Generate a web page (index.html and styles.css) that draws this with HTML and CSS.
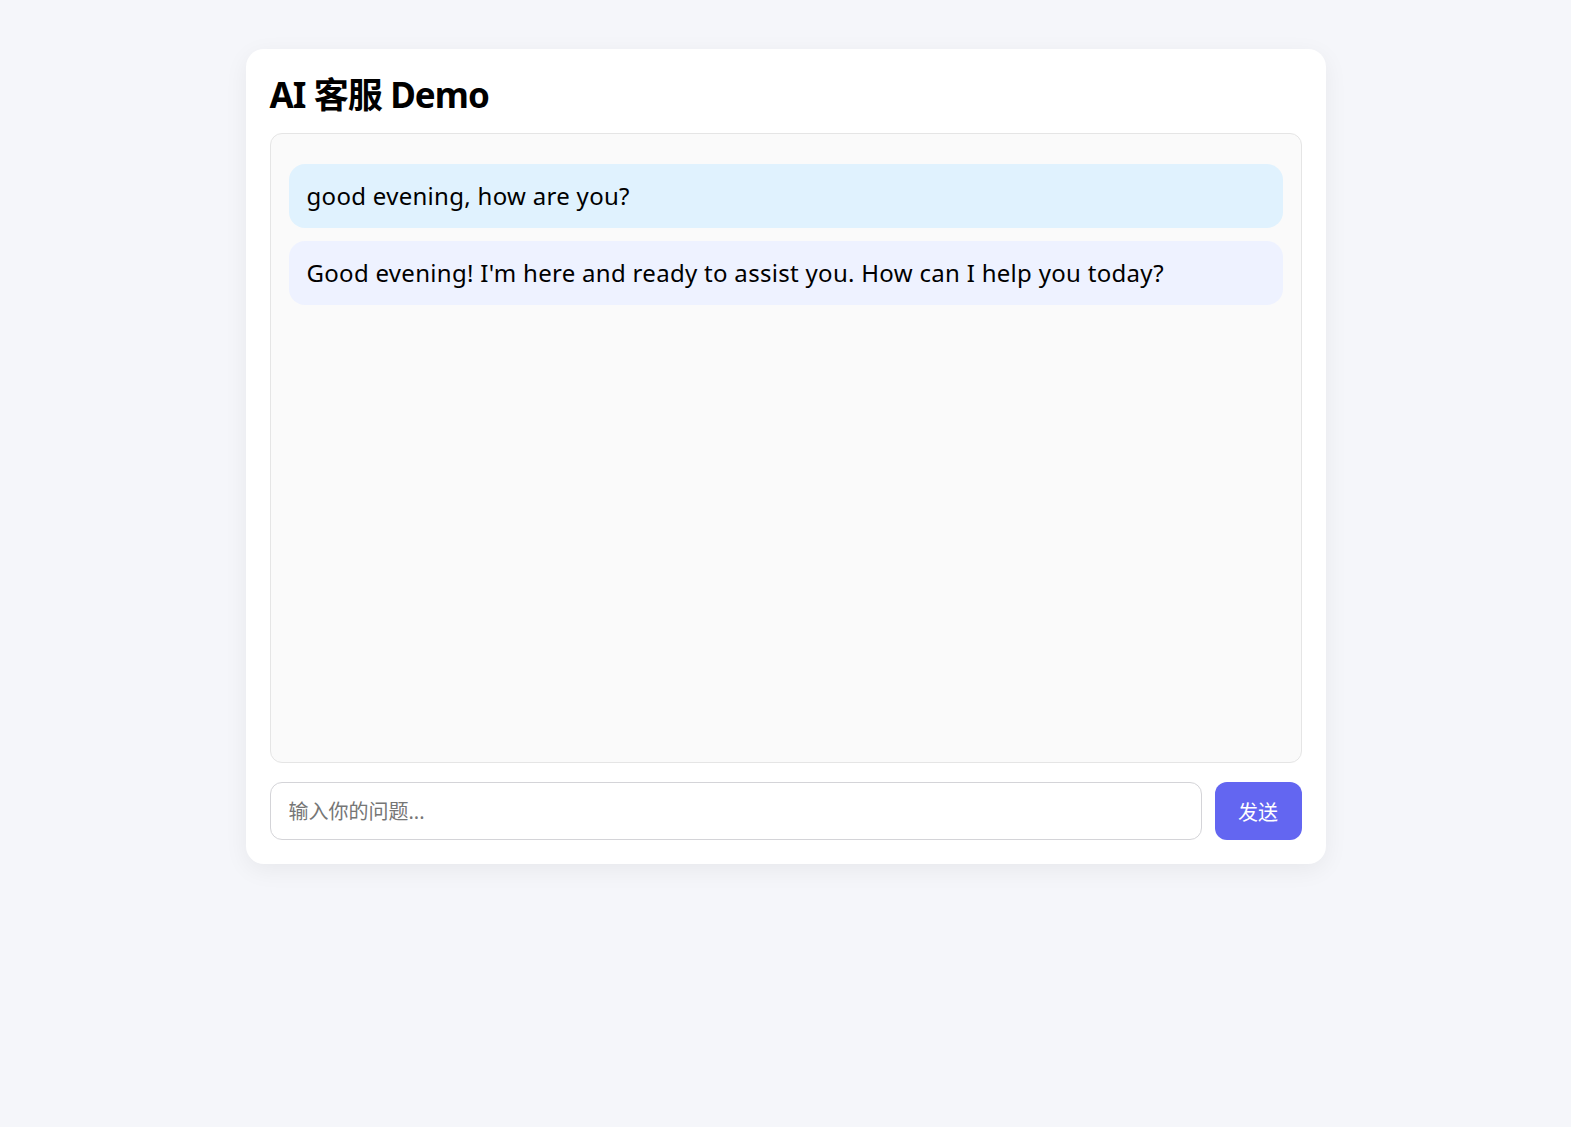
FILE: index.html
```html
<!DOCTYPE html>
<html lang="zh-CN">
<head>
<meta charset="utf-8">
<title>AI 客服 Demo</title>
<link rel="stylesheet" href="styles.css">
</head>
<body>
<div class="card">
  <h1 class="title">AI 客服 Demo</h1>
  <div class="chat">
    <div class="msg msg-user">good evening, how are you?</div>
    <div class="msg msg-bot">Good evening! I'm here and ready to assist you. How can I help you today?</div>
  </div>
  <div class="composer">
    <input class="composer-input" type="text" placeholder="输入你的问题...">
    <button class="composer-send" type="button">发送</button>
  </div>
</div>
</body>
</html>
```

FILE: styles.css
```css
html, body {
  margin: 0;
  padding: 0;
}
body {
  background: #f5f6fa;
  font-family: "Noto Sans", "Noto Sans CJK SC", sans-serif;
  color: #000;
  min-height: 1127px;
}
.card {
  width: 1080px;
  margin: 49px auto 0;
  background: #fff;
  border-radius: 18px;
  box-shadow: 0 6px 24px rgba(0, 0, 0, 0.06);
  padding: 24px;
  box-sizing: border-box;
}
.title {
  margin: 0 0 12px;
  font-size: 35px;
  line-height: 48px;
  height: 48px;
  font-weight: 700;
  letter-spacing: -0.9px;
  position: relative;
  top: -2px;
  font-family: "Noto Sans", "Noto Sans CJK SC", sans-serif;
}
.chat {
  height: 630px;
  box-sizing: border-box;
  border: 1px solid #e5e5e5;
  border-radius: 12px;
  background: #fafafa;
  padding: 18px;
  display: flex;
  flex-direction: column;
  gap: 13px;
}
.msg {
  border-radius: 16px;
  padding: 16px 18px;
  font-size: 24px;
  line-height: 32px;
  letter-spacing: 0.3px;
}
.msg-user {
  margin-top: 12px;
  background: #e0f2fe;
}
.msg-bot {
  background: #eef2ff;
}
.composer {
  display: flex;
  gap: 13px;
  margin-top: 19px;
}
.composer-input {
  flex: 1;
  height: 58px;
  box-sizing: border-box;
  border: 1px solid #d4d4d8;
  border-radius: 12px;
  padding: 0 18px;
  font-size: 20px;
  font-family: "Noto Sans", "Noto Sans CJK SC", sans-serif;
  outline: none;
}
.composer-input::placeholder {
  color: #767676;
}
.composer-send {
  width: 87px;
  height: 58px;
  border: none;
  border-radius: 12px;
  background: #6366f1;
  color: #fff;
  font-size: 20px;
  font-family: "Noto Sans CJK SC", "Noto Sans", sans-serif;
  cursor: pointer;
}
```
